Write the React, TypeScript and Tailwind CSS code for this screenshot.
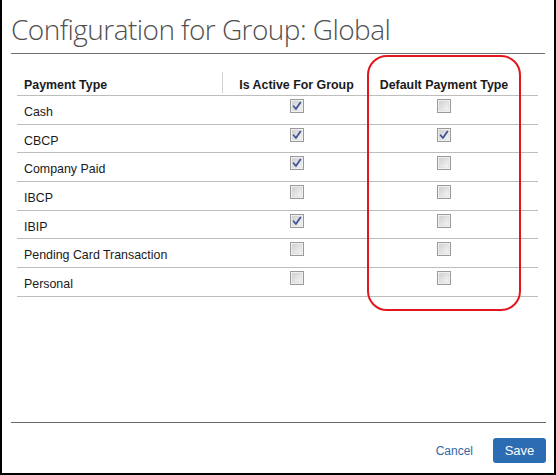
import React from 'react';

type Row = { name: string; active: boolean; isDefault: boolean };

const rows: Row[] = [
  { name: 'Cash', active: true, isDefault: false },
  { name: 'CBCP', active: true, isDefault: true },
  { name: 'Company Paid', active: true, isDefault: false },
  { name: 'IBCP', active: false, isDefault: false },
  { name: 'IBIP', active: true, isDefault: false },
  { name: 'Pending Card Transaction', active: false, isDefault: false },
  { name: 'Personal', active: false, isDefault: false },
];

function Checkbox({ checked }: { checked: boolean }) {
  return (
    <svg width="14" height="14" viewBox="0 0 14 14" className="block">
      <defs>
        <linearGradient id="cbfill" x1="0" y1="0" x2="1" y2="1">
          <stop offset="0" stopColor="#cfcfcf" />
          <stop offset="1" stopColor="#f7f7f7" />
        </linearGradient>
      </defs>
      <rect x="0.5" y="0.5" width="13" height="13" fill="#fff" stroke="#9a9a9a" />
      <rect x="2" y="2" width="10" height="10" fill="url(#cbfill)" stroke="#d8d8d8" strokeWidth="0.8" />
      {checked && (
        <path d="M3.6 7.2 L5.9 10 L10.4 3.6" fill="none" stroke="#3e5596" strokeWidth="1.8" strokeLinecap="round" strokeLinejoin="round" />
      )}
    </svg>
  );
}

export default function App() {
  return (
    <div
      className="relative w-[556px] h-[475px] bg-white border-l-2 border-r-2 border-b-2 border-black flex flex-col"
      style={{ fontFamily: '"Liberation Sans", Arial, sans-serif' }}
    >
      {/* Title */}
      <div className="mx-[9px] h-[54px] border-b border-[#707070] pt-[15px]">
        <h1
          className="text-[28px] leading-[28px] font-light text-[#505050] tracking-[-0.55px]"
          style={{ fontFamily: '"Open Sans", sans-serif' }}
        >
          Configuration for Group: Global
        </h1>
      </div>

      {/* Table */}
      <div className="ml-[15px] mt-[18px] w-[521px] text-[12.4px] text-[#1a1a1a]">
        <div className="grid grid-cols-[205px_148px_148px_1fr] h-[24px] border-b border-[#bdbdbd] font-bold">
          <div className="pl-[7px] pt-[6px] leading-[14px]">Payment Type</div>
          <div className="border-l border-[#cfcfcf] h-[21px] text-center pt-[6px] leading-[14px]">Is Active For Group</div>
          <div className="text-center pt-[6px] leading-[14px]">Default Payment Type</div>
          <div />
        </div>
        {rows.map((r) => (
          <div
            key={r.name}
            className="grid grid-cols-[205px_148px_148px_1fr] h-[28.67px] border-b border-[#bdbdbd]"
          >
            <div className="pl-[7px] pt-[9px] leading-[14px]">{r.name}</div>
            <div className="flex justify-center pt-[3px] pl-[1px]">
              <Checkbox checked={r.active} />
            </div>
            <div className="flex justify-center pt-[3px]">
              <Checkbox checked={r.isDefault} />
            </div>
            <div />
          </div>
        ))}
      </div>

      {/* Footer */}
      <div className="mt-auto ml-[9px] mr-[8px] border-t border-[#666] pt-[15px] pb-[10px] flex items-center justify-end gap-[20px]">
        <button className="text-[12px] text-[#3465a4] leading-[14px]">Cancel</button>
        <button className="h-[25px] w-[53px] rounded-[3px] bg-[#2b6cb3] text-white text-[13px] leading-[25px]">
          Save
        </button>
      </div>

      {/* Red highlight annotation */}
      <div className="absolute left-[365px] top-[55px] w-[154px] h-[256px] border-2 border-[#e3161d] rounded-[20px] pointer-events-none" />
    </div>
  );
}
